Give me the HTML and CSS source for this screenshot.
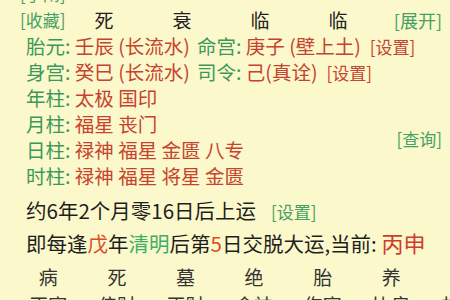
FILE: index.html
```html
<!DOCTYPE html>
<html lang="zh-CN">
<head>
<meta charset="utf-8">
<link rel="stylesheet" href="styles.css">
</head>
<body>
<div class="page">
  <div class="row0"><span class="link">[手闸]</span></div>
  <div class="row1">
    <span class="link">[收藏]</span>
    <span class="star">死</span>
    <span class="star">衰</span>
    <span class="star">临</span>
    <span class="star">临</span>
    <span class="link right">[展开]</span>
  </div>
  <div class="info">
    <div class="pair">
      <div class="cell"><span class="lbl">胎元:</span> <span class="val">壬辰 (长流水)</span></div>
      <div class="cell"><span class="lbl">命宫:</span> <span class="val">庚子 (壁上土)</span><span class="set">[设置]</span></div>
    </div>
    <div class="pair">
      <div class="cell"><span class="lbl">身宫:</span> <span class="val">癸巳 (长流水)</span></div>
      <div class="cell"><span class="lbl">司令:</span> <span class="val">己(真诠)</span><span class="set">[设置]</span></div>
    </div>
    <div class="cell"><span class="lbl">年柱:</span> <span class="val">太极 国印</span></div>
    <div class="cell"><span class="lbl">月柱:</span> <span class="val">福星 丧门</span></div>
    <div class="cell"><span class="lbl">日柱:</span> <span class="val">禄神 福星 金匮 八专</span></div>
    <div class="cell"><span class="lbl">时柱:</span> <span class="val">禄神 福星 将星 金匮</span></div>
    <div class="query link">[查询]</div>
  </div>
  <div class="luck">约6年2个月零16日后上运<span class="link small">[设置]</span></div>
  <div class="luck2">即每逢<span class="hot">戊</span>年<span class="green">清明</span>后第<span class="hot">5</span>日交脱大运,当前: <span class="cur">丙申</span></div>
  <div class="stages">
    <span>病</span><span>死</span><span>墓</span><span>绝</span><span>胎</span><span>养</span>
  </div>
  <div class="gods">
    <span>正官</span><span>偏财</span><span>正财</span><span>食神</span><span>伤官</span><span>比肩</span><span>劫财</span>
  </div>
</div>
</body>
</html>
```

FILE: styles.css
```css
html, body {
  margin: 0;
  padding: 0;
  background: #fbf8cb;
  overflow: hidden;
}
body {
  width: 450px;
  height: 300px;
  font-family: "Noto Sans CJK SC", "Noto Sans", sans-serif;
  color: #222;
}
.page {
  margin-top: -19px;
}
.link {
  color: #45a066;
  font-size: 17px;
  white-space: nowrap;
}
.row0 {
  height: 26px;
  line-height: 26px;
  padding-left: 20px;
}
.row1 {
  display: grid;
  grid-template-columns: 45px repeat(4, 78px) 1fr;
  height: 26px;
  line-height: 26px;
  padding: 0 8px 0 20px;
}
.row1 .star {
  text-align: center;
  font-size: 19px;
  color: #222;
}
.row1 .right {
  text-align: right;
  font-size: 18px;
}
.info {
  display: grid;
  grid-template-columns: 1fr auto;
  grid-auto-rows: 26px;
  padding: 0 8px 0 26px;
  font-size: 19.5px;
  line-height: 26px;
}
.pair {
  grid-column: 1 / 3;
  display: grid;
  grid-template-columns: 171px 1fr;
}
.cell {
  grid-column: 1;
  white-space: nowrap;
}
.pair .cell + .cell {
  grid-column: 2;
}
.lbl {
  color: #3c985a;
}
.val {
  color: #c6432f;
}
.set {
  color: #c6432f;
  font-size: 17px;
  margin-left: 9px;
}
.query {
  grid-column: 2;
  grid-row: 4 / 6;
  align-self: center;
  padding-top: 4px;
}
.luck {
  margin-top: 6px;
  height: 30px;
  line-height: 30px;
  padding-left: 26px;
  font-size: 20.5px;
  color: #1e1e1e;
}
.luck .small {
  margin-left: 15px;
}
.luck2 {
  height: 34px;
  line-height: 34px;
  padding-left: 26px;
  font-size: 20.5px;
  color: #1e1e1e;
  white-space: nowrap;
}
.hot {
  color: #dc4b2a;
}
.green {
  color: #3fae68;
}
.cur {
  color: #cf3b2c;
  font-size: 22px;
}
.stages, .gods {
  display: grid;
  grid-template-columns: repeat(7, 68.6px);
  padding-left: 14px;
  height: 28px;
  line-height: 28px;
  font-size: 19px;
  color: #333;
  white-space: nowrap;
}
.stages {
  margin-top: 4px;
}
.stages span, .gods span {
  text-align: center;
}
```
